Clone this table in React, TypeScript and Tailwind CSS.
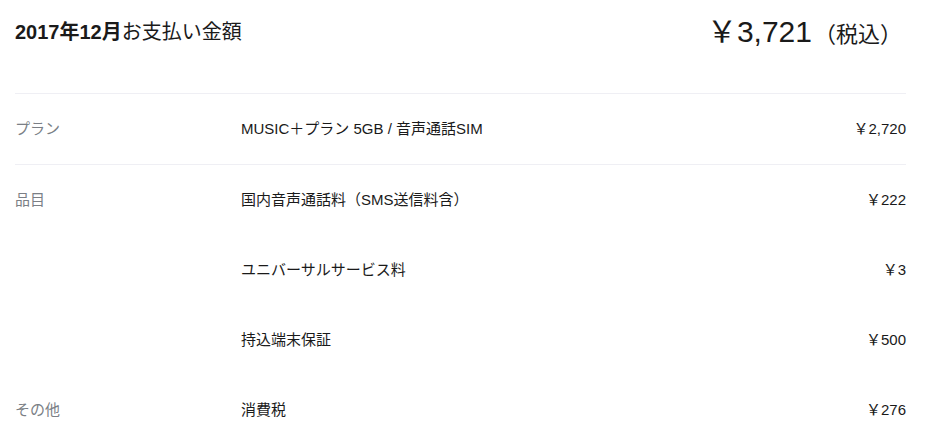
const font = { fontFamily: '"Liberation Sans", "Noto Sans CJK JP", sans-serif' };

type Row = { label?: string; name: string; price: string; divider?: boolean };

const rows: Row[] = [
  { label: 'プラン', name: 'MUSIC＋プラン 5GB / 音声通話SIM', price: '￥2,720', divider: true },
  { label: '品目', name: '国内音声通話料（SMS送信料含）', price: '￥222' },
  { name: 'ユニバーサルサービス料', price: '￥3' },
  { name: '持込端末保証', price: '￥500' },
  { label: 'その他', name: '消費税', price: '￥276' },
];

export default function App() {
  return (
    <div className="w-[934px] h-[434px] overflow-hidden bg-white text-[#1a1a1a]" style={font}>
      <div className="ml-[15px] w-[891px]">
        {/* Header: month + total */}
        <div className="flex items-center justify-between h-[64px] mb-[29px] pr-[4px]">
          <h1 className="text-[20px] leading-none">
            <span className="font-bold">2017年12月</span>お支払い金額
          </h1>
          <div className="flex items-baseline leading-none">
            <span className="text-[30px]">￥3,721</span>
            <span className="text-[22px] ml-[2px]">（税込）</span>
          </div>
        </div>

        <div className="border-t border-[#efeff4]">
          {rows.map((row, i) => (
            <div
              key={i}
              className={`flex items-center h-[70px] text-[15px] ${
                row.divider ? 'border-b border-[#efeff4] h-[71px]' : ''
              }`}
            >
              <div className="w-[226px] text-[#7b7f86]">{row.label}</div>
              <div className="flex-1">{row.name}</div>
              <div className="text-right">{row.price}</div>
            </div>
          ))}
        </div>
      </div>
    </div>
  );
}
